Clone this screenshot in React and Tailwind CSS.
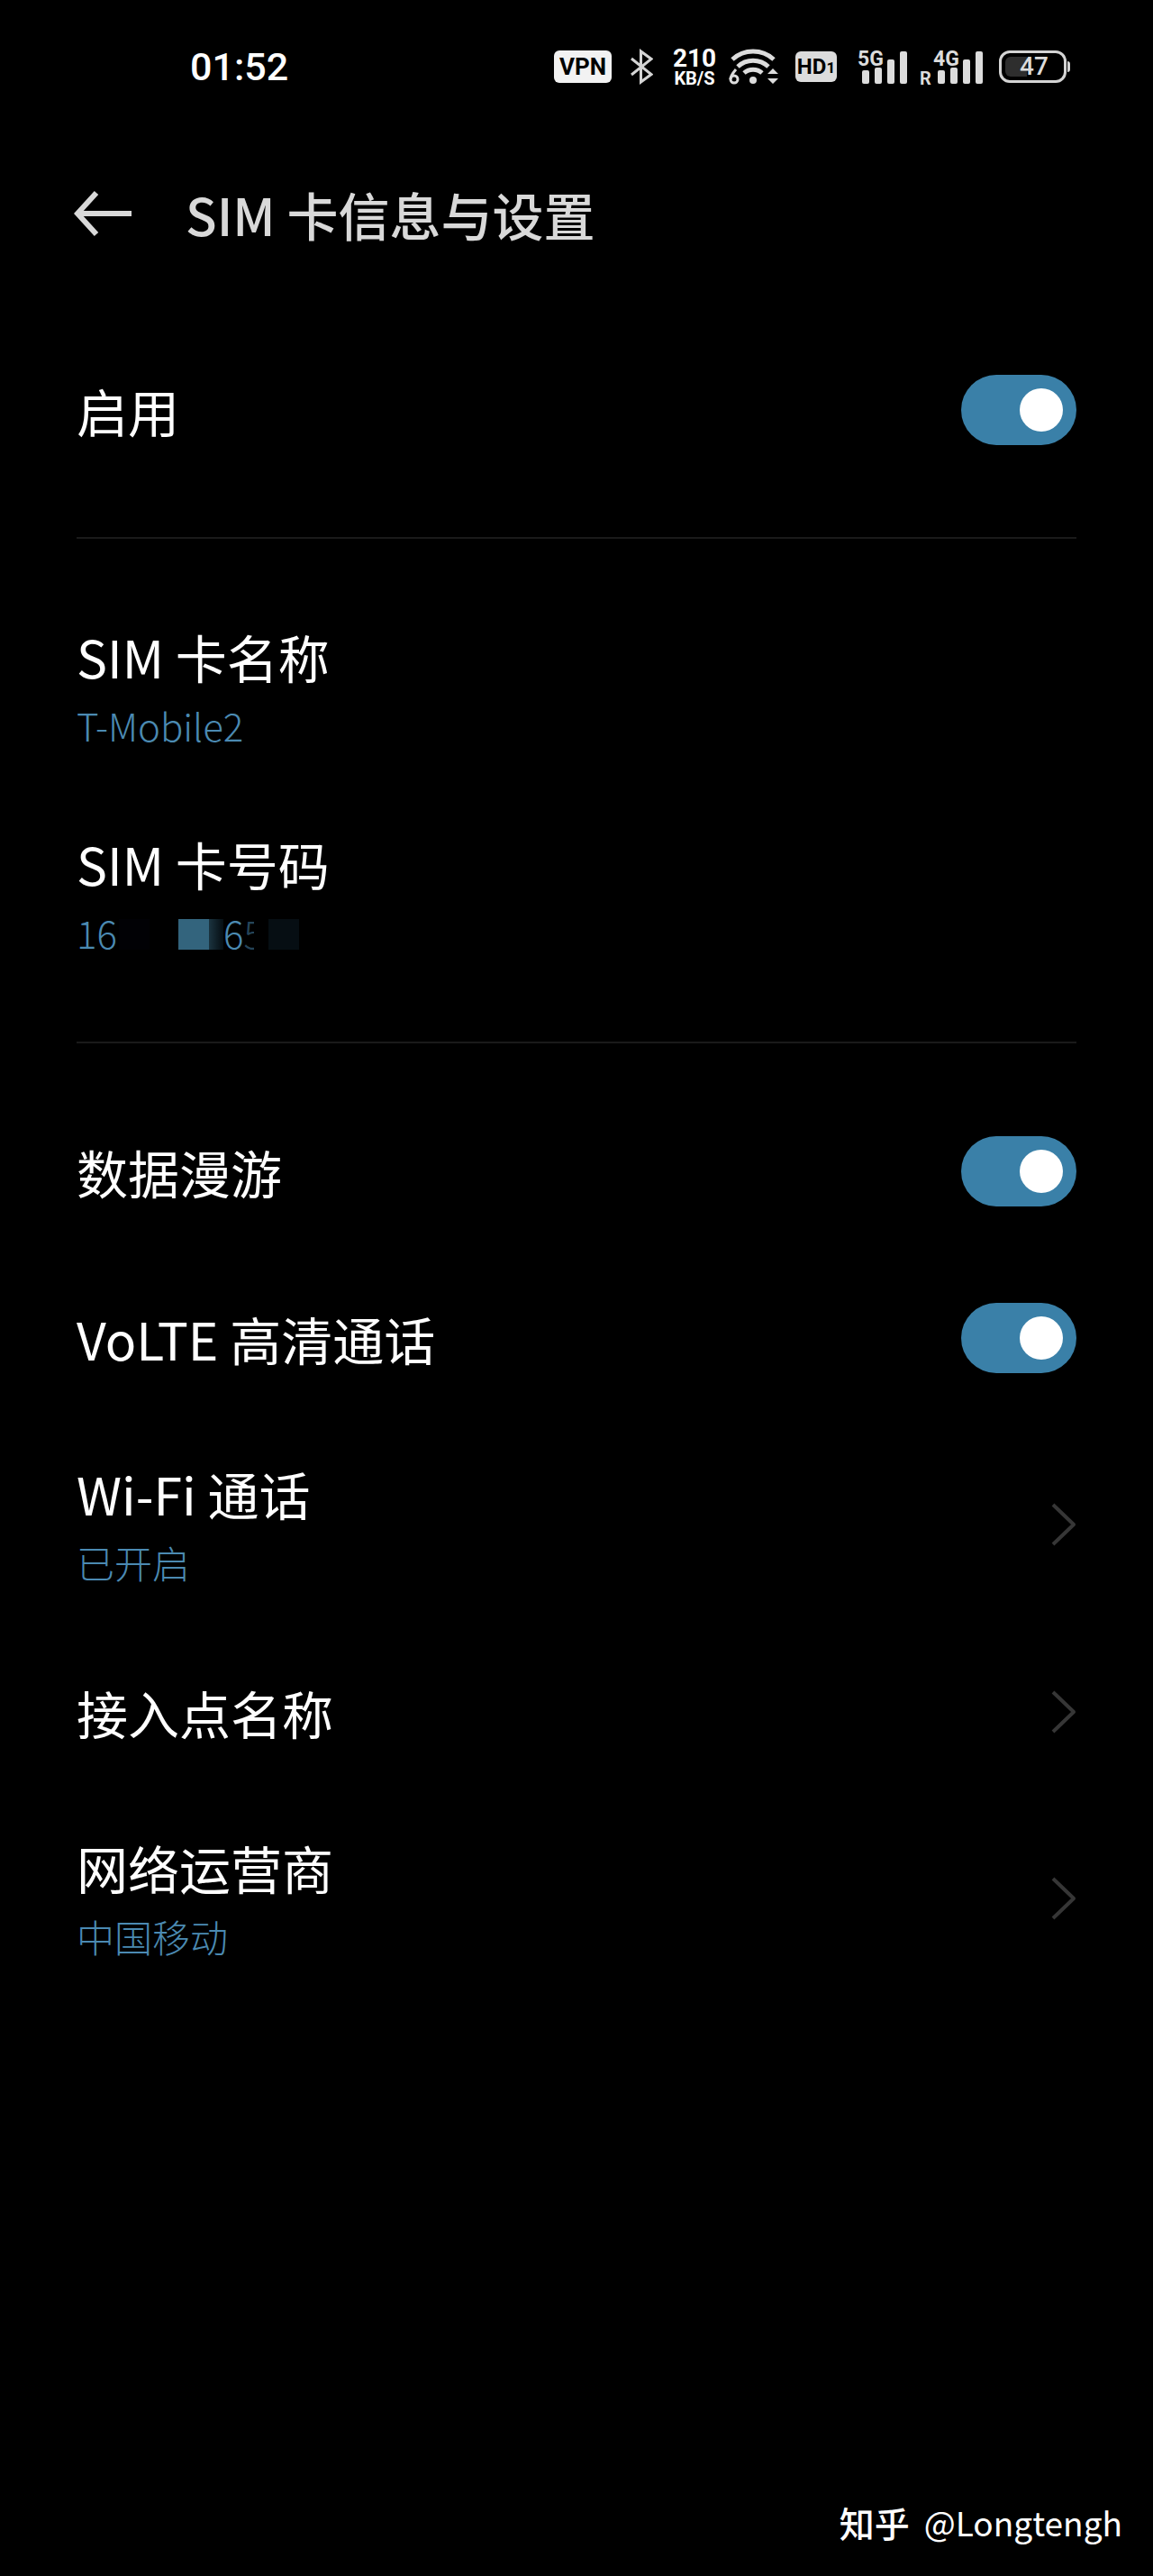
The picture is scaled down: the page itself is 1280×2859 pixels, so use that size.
import { useState } from "react";

/* STATUS BAR ICONS */
const BluetoothIcon = () => (
  <svg width="26" height="40" viewBox="0 0 26 40" fill="none" stroke="#d4d4d4" strokeWidth="3">
    <path d="M2 11 L24 28.500 L12.500 37 V3 L24 11.500 L2 29" />
  </svg>
);

const WifiIcon = () => (
  <svg width="56" height="42" viewBox="0 0 56 42" fill="none" stroke="#dcdcdc">
    <path d="M4 13 A34 34 0 0 1 50 13" strokeWidth="5" />
    <path d="M10 21 A25 25 0 0 1 44 21" strokeWidth="5" />
    <path d="M17 28 A15 15 0 0 1 37 28" strokeWidth="5" />
    <circle cx="27" cy="36" r="4" fill="#dcdcdc" stroke="none" />
    <path d="M8 24 Q2 31 2 35" strokeWidth="3" />
    <circle cx="6" cy="35" r="4" strokeWidth="3" />
    <path d="M43 29 L49 23 L55 29 Z M43 34 L49 40 L55 34 Z" fill="#dcdcdc" stroke="none" />
  </svg>
);

const SignalIcon = ({ label, roaming }) => (
  <svg
    width="72"
    height="40"
    viewBox="0 0 72 40"
    fill="#dcdcdc"
    fontFamily="Roboto, sans-serif"
    className="overflow-visible"
  >
    {roaming && <text x="0" y="40" fontSize="20" fontWeight="700">R</text>}
    <text x="15" y="19" fontSize="23" fontWeight="700">{label}</text>
    <rect x="20" y="24" width="8" height="15" rx="2" />
    <rect x="34" y="21" width="8" height="18" rx="2" />
    <rect x="48" y="12" width="8" height="27" rx="2" />
    <rect x="62" y="3" width="8" height="36" rx="2" />
  </svg>
);

const BackIcon = () => (
  <svg width="64" height="52" viewBox="0 0 64 52" fill="none" stroke="#d9d9d9" strokeWidth="6">
    <path d="M25 3 L4 26 L25 49 M4 26 H64" />
  </svg>
);

const ChevronIcon = () => (
  <svg width="28" height="48" viewBox="0 0 28 48" fill="none" stroke="#363636" strokeWidth="4">
    <path d="M2 2 L25 24 L2 46" strokeLinejoin="round" />
  </svg>
);

const StatusBar = () => (
  <div className="flex h-[148px] items-center justify-between pr-[92px] pl-[211px]">
    <span className="font-[Roboto] text-[43px] font-medium text-white">01:52</span>

    <div className="flex items-center font-[Roboto]">
      <span className="flex h-9 w-16 items-center justify-center rounded-md bg-[#f2f2f2] text-[26px] font-bold text-black">
        VPN
      </span>
      <span className="ml-5">
        <BluetoothIcon />
      </span>
      <span className="ml-5 flex w-[52px] flex-col items-center font-bold text-white">
        <span className="text-[28px] leading-[25px]">210</span>
        <span className="text-[20px] leading-5">KB/S</span>
      </span>
      <span className="ml-3">
        <WifiIcon />
      </span>
      <span className="ml-[18px] flex h-[34px] w-[46px] items-center justify-center rounded-md bg-[#dcdcdc] text-[24px] font-bold text-black">
        HD<span className="mt-1 text-[17px]">1</span>
      </span>
      <span className="ml-2">
        <SignalIcon label="5G" />
      </span>
      <span className="ml-3">
        <SignalIcon label="4G" roaming />
      </span>
      <span className="ml-4 flex h-9 w-[75px] items-center rounded-xl border-3 border-[#d4d4d4] p-1">
        <span className="h-full w-6 rounded-l-md bg-[#2e2e2e]" />
        <span className="-ml-2 text-[28px] font-medium text-[#dcdcdc]">47</span>
      </span>
      <span className="ml-px h-3 w-[3px] rounded-r-sm bg-[#d4d4d4]" />
    </div>
  </div>
);

const Switch = ({ label, checked, onChange }) => (
  <span className="relative flex h-[78px] w-32 items-center">
    <input
      type="checkbox"
      role="switch"
      aria-label={label}
      checked={checked}
      onChange={e => onChange(e.target.checked)}
      className="peer h-full w-full appearance-none rounded-full bg-[#333333] checked:bg-[#3a80a8]"
    />
    <span className="pointer-events-none absolute left-[15px] size-12 rounded-full bg-white peer-checked:left-[65px]" />
  </span>
);

const RowText = ({ title, children }) => (
  <span className="flex flex-col items-start">
    <span className="text-[57px] leading-[84px] text-white">{title}</span>
    {children && (
      <span className="text-[42px] leading-[70px] font-light text-[#4b8ab2]">{children}</span>
    )}
  </span>
);

const SwitchRow = ({ title }) => {
  const [on, setOn] = useState(true);

  return (
    <label className="flex h-[185px] items-center justify-between">
      <RowText title={title} />
      <Switch label={title} checked={on} onChange={setOn} />
    </label>
  );
};

const LinkRow = ({ title, value }) => (
  <button
    className={`flex w-full items-center justify-between text-left ${value ? "h-[230px]" : "h-[185px]"}`}
  >
    <RowText title={title}>{value}</RowText>
    <ChevronIcon />
  </button>
);

const InfoRow = ({ title, children }) => (
  <button className="flex h-[230px] w-full items-center text-left">
    <RowText title={title}>{children}</RowText>
  </button>
);

/* partly hidden phone number */
const MaskedNumber = () => (
  <span className="flex items-center">
    <span className="w-[47px]">16</span>
    <span className="mt-1 mr-8 h-[34px] w-[34px] bg-[#010105]" />
    <span className="mt-1 h-[34px] w-[34px] bg-[#33647d]" />
    <span className="mt-1 h-[34px] w-4 bg-linear-to-r from-[#1b3440] to-[#060e13]" />
    <span>6</span>
    <span className="mt-1 h-[34px] w-3 overflow-hidden leading-[30px] opacity-50">5</span>
    <span className="mt-1 ml-4 h-[34px] w-[34px] bg-[#060e13]" />
  </span>
);

const App = () => {
  return (
    <div className="flex min-h-screen flex-col bg-black font-['Noto_Sans_CJK_SC',sans-serif]">
      <StatusBar />

      {/* HEADER */}
      <header className="flex h-[178px] items-center gap-[60px] px-[82px]">
        <button aria-label="返回">
          <BackIcon />
        </button>
        <h1 className="text-[57px] leading-[84px] font-medium text-[#d9d9d9]">SIM 卡信息与设置</h1>
      </header>

      <main className="flex-1 px-[85px]">
        <section className="border-b-2 border-[#1a1a1a] pt-9 pb-[49px]">
          <SwitchRow title="启用" />
        </section>

        <section className="border-b-2 border-[#1a1a1a] pt-[50px] pb-12">
          <InfoRow title="SIM 卡名称">T-Mobile2</InfoRow>
          <InfoRow title="SIM 卡号码">
            <MaskedNumber />
          </InfoRow>
        </section>

        <section className="pt-[49px]">
          <SwitchRow title="数据漫游" />
          <SwitchRow title="VoLTE 高清通话" />
          <LinkRow title="Wi-Fi 通话" value="已开启" />
          <LinkRow title="接入点名称" />
          <LinkRow title="网络运营商" value="中国移动" />
        </section>
      </main>

      <footer className="flex items-center justify-end gap-4 px-[34px] pb-[30px] text-[37px] leading-[60px] text-white">
        <span className="text-[39px] font-medium">知乎</span>
        <span>@Longtengh</span>
      </footer>
    </div>
  );
};

export default App;
